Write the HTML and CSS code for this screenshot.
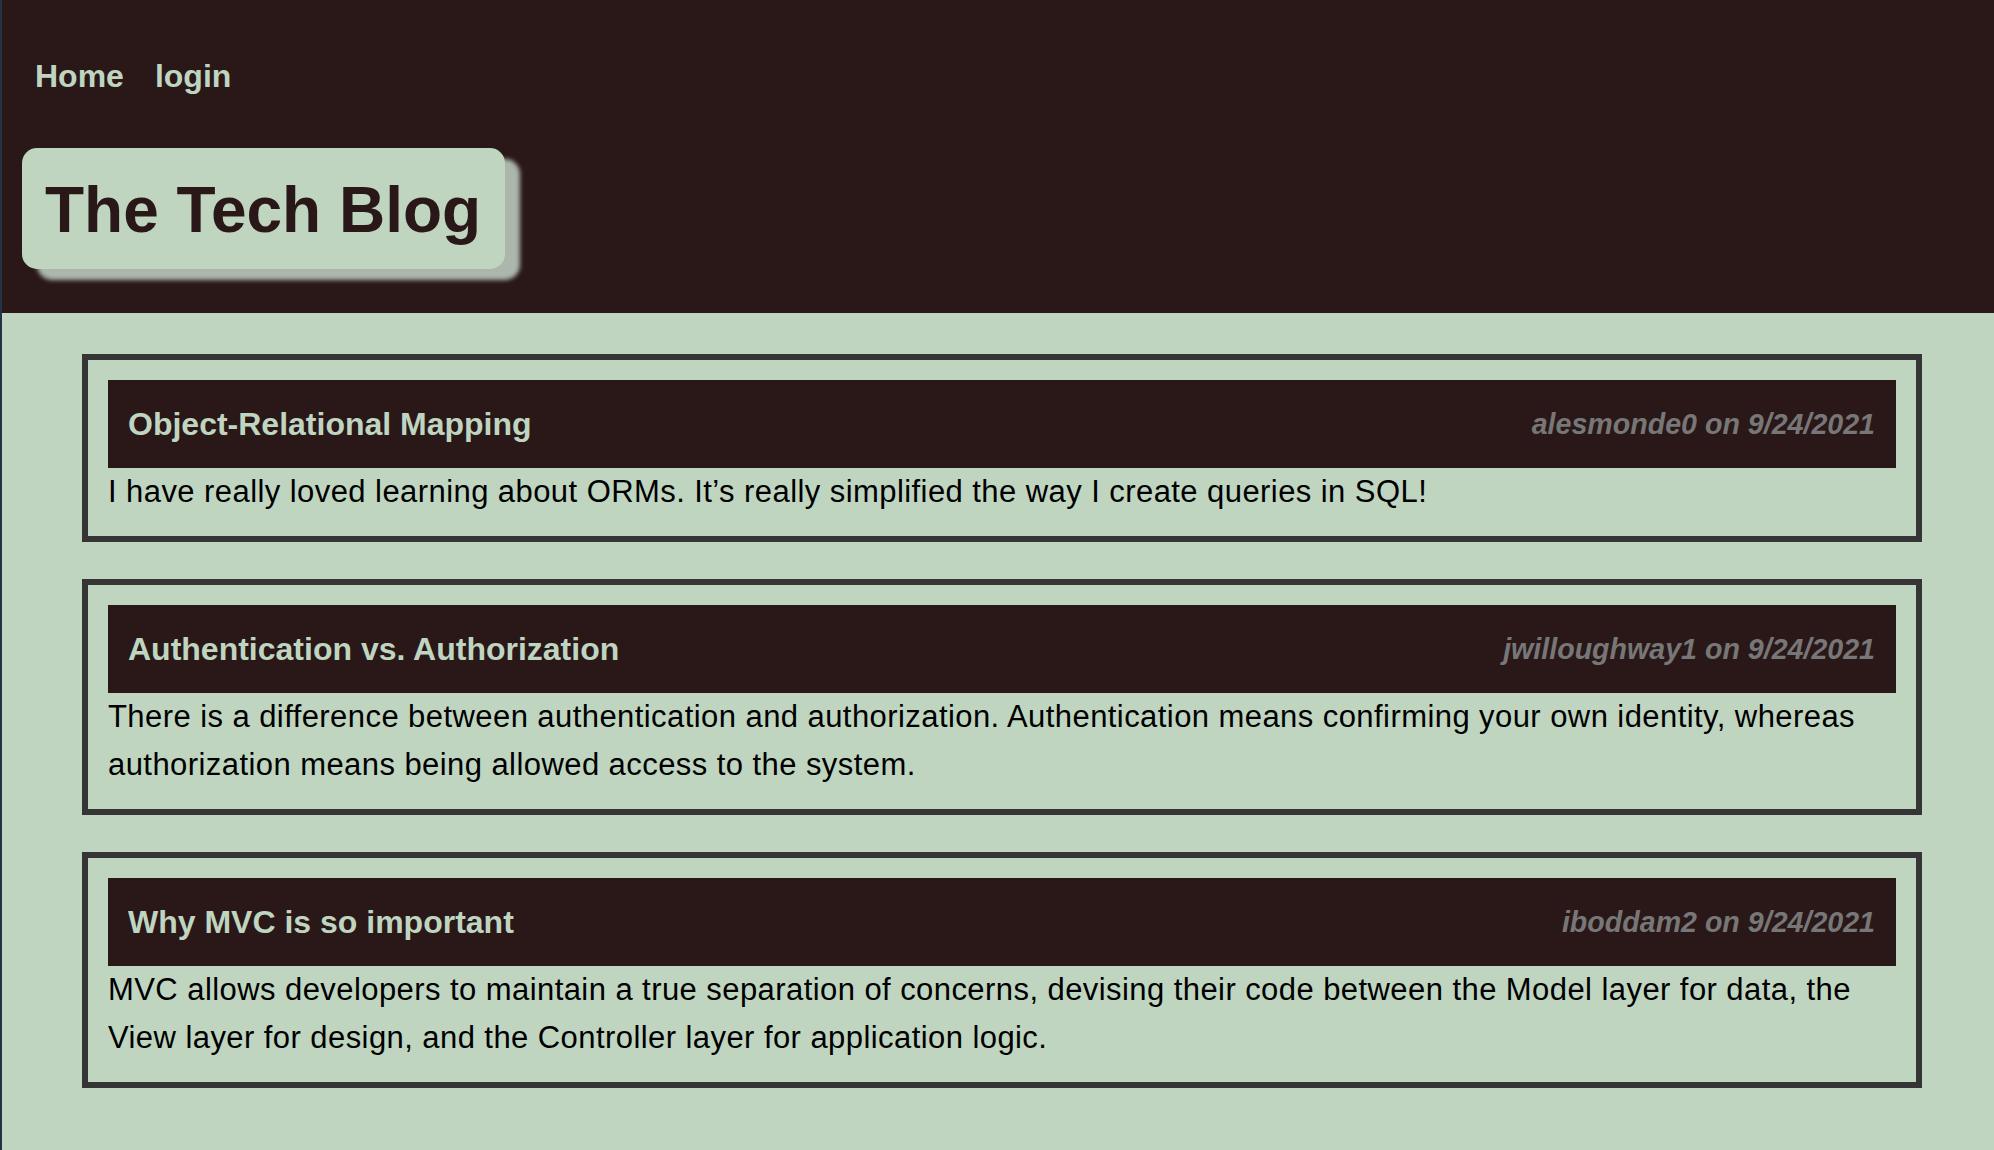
FILE: index.html
```html
<!DOCTYPE html>
<html lang="en">
<head>
<meta charset="utf-8">
<title>The Tech Blog</title>
<link rel="stylesheet" href="styles.css">
</head>
<body>
<header class="site-header">
  <nav class="nav">
    <a class="nav-link" href="#">Home</a>
    <a class="nav-link" href="#">login</a>
  </nav>
  <div class="brand"><h1 class="brand-title">The Tech Blog</h1></div>
</header>
<main class="posts">
  <article class="post">
    <div class="post-head">
      <h2 class="post-title">Object-Relational Mapping</h2>
      <span class="post-meta">alesmonde0 on 9/24/2021</span>
    </div>
    <p class="post-body">I have really loved learning about ORMs. It’s really simplified the way I create queries in SQL!</p>
  </article>
  <article class="post">
    <div class="post-head">
      <h2 class="post-title">Authentication vs. Authorization</h2>
      <span class="post-meta">jwilloughway1 on 9/24/2021</span>
    </div>
    <p class="post-body">There is a difference between authentication and authorization. Authentication means confirming your own identity, whereas authorization means being allowed access to the system.</p>
  </article>
  <article class="post">
    <div class="post-head">
      <h2 class="post-title">Why MVC is so important</h2>
      <span class="post-meta">iboddam2 on 9/24/2021</span>
    </div>
    <p class="post-body">MVC allows developers to maintain a true separation of concerns, devising their code between the Model layer for data, the View layer for design, and the Controller layer for application logic.</p>
  </article>
</main>
</body>
</html>
```

FILE: styles.css
```css
* { box-sizing: border-box; }

html, body { height: 100%; }

body {
  margin: 0;
  background: #bfd5c0;
  border-left: 2px solid #1f3546;
  font-family: "Liberation Sans", Arial, Helvetica, sans-serif;
  color: #000;
}

.site-header {
  background: #2a1819;
  height: 313px;
  padding: 56px 0 0 0;
}

.nav {
  display: flex;
  gap: 31px;
  padding-left: 33px;
}

.nav-link {
  color: #bfd5c0;
  text-decoration: none;
  font-weight: bold;
  font-size: 32px;
  line-height: 40px;
}

.brand {
  display: inline-block;
  margin: 52px 0 0 20px;
  background: #bfd5c0;
  border-radius: 15px;
  padding: 30px 24px 27px 23px;
  box-shadow: 15px 11px 4px #abb7aa;
}

.brand-title {
  margin: 0;
  font-size: 64px;
  line-height: 64px;
  font-weight: bold;
  color: #2a1819;
}

.posts {
  padding: 41px 72px 40px 80px;
}

.post {
  border: 6px solid #353535;
  padding: 20px;
  margin-bottom: 37px;
}

.post-head {
  background: #2a1819;
  height: 88px;
  display: flex;
  align-items: center;
  justify-content: space-between;
  padding: 0 21px 0 20px;
}

.post-title {
  margin: 0;
  font-size: 32px;
  font-weight: bold;
  color: #bfd5c0;
}

.post-meta {
  font-size: 28.6px;
  font-weight: bold;
  font-style: italic;
  color: #777777;
}

.post-body {
  margin: 0;
  font-size: 31px;
  line-height: 48px;
  letter-spacing: 0.43px;
  color: #000;
}
```
